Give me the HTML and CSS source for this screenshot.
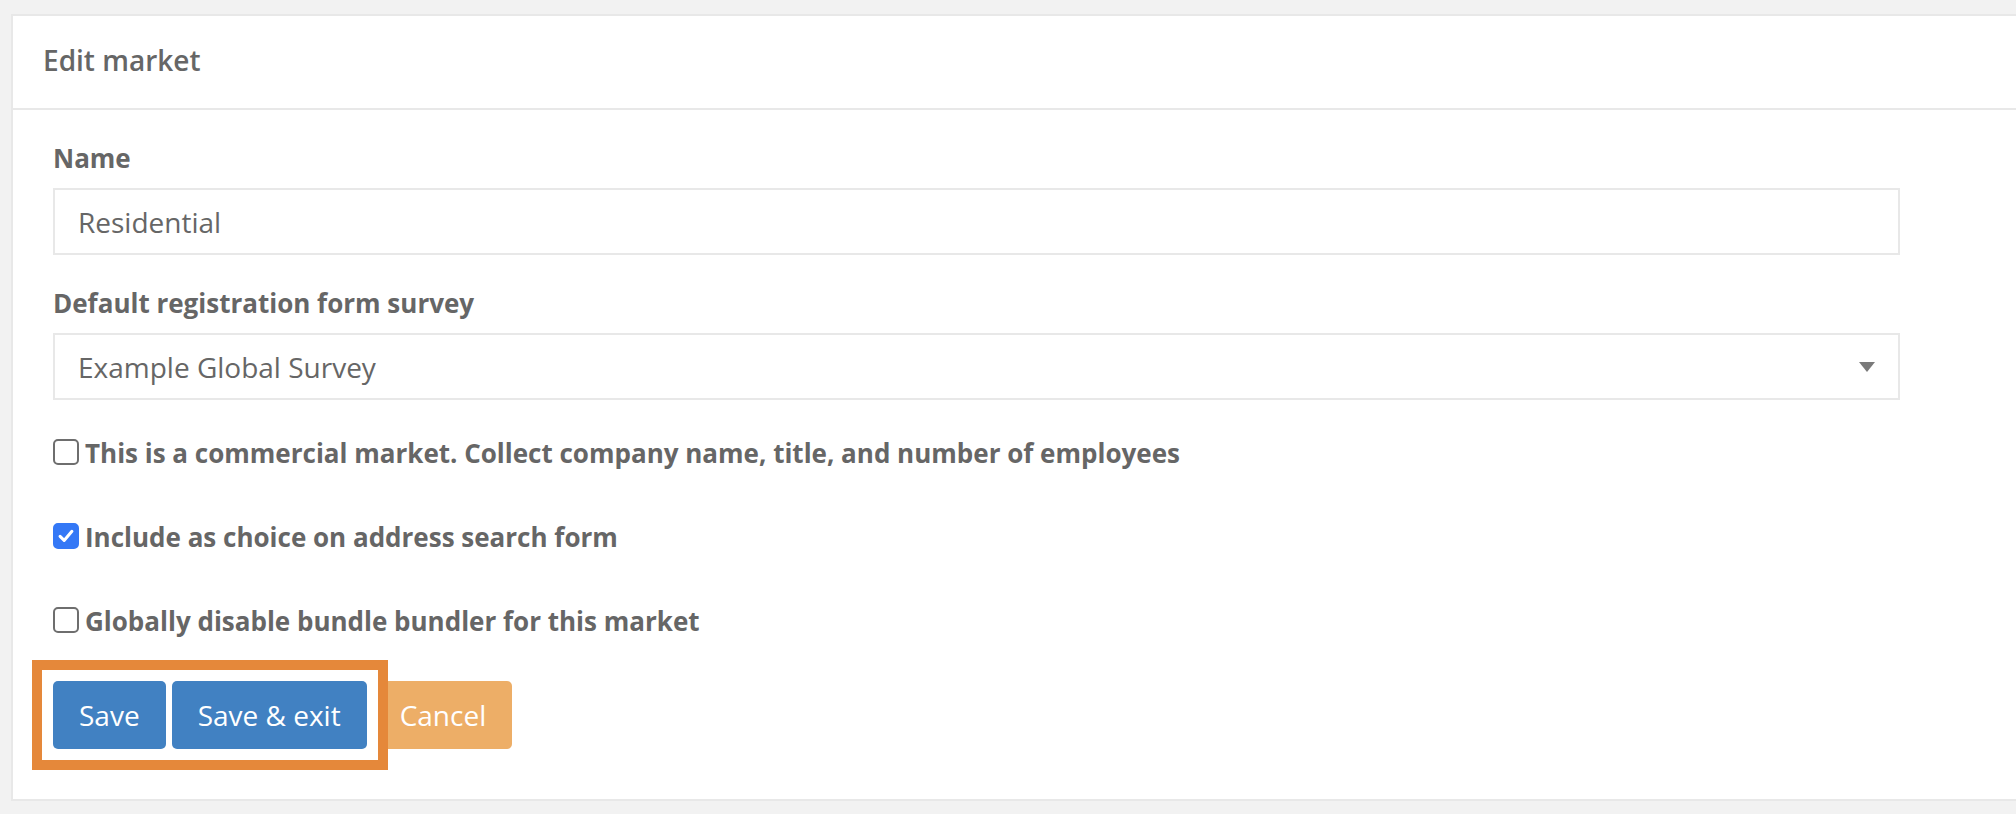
FILE: index.html
```html
<!DOCTYPE html>
<html lang="en">
<head>
<meta charset="utf-8">
<title>Edit market</title>
<link rel="stylesheet" href="styles.css">
</head>
<body>
<div class="panel">
  <div class="panel-heading">Edit market</div>
  <div class="panel-body">
    <form class="form">
      <div class="field">
        <label class="field-label">Name</label>
        <div class="control">Residential</div>
      </div>
      <div class="field">
        <label class="field-label">Default registration form survey</label>
        <div class="control select">
          <span>Example Global Survey</span>
          <span class="caret"></span>
        </div>
      </div>
      <div class="checks">
        <label class="check">
          <span class="box"></span>
          <span class="check-text">This is a commercial market. Collect company name, title, and number of employees</span>
        </label>
        <label class="check">
          <span class="box checked"><svg viewBox="0 0 26 26" width="22" height="22"><path d="M6 13.5 L10.8 18.2 L20 7.5" fill="none" stroke="#fff" stroke-width="3.6" stroke-linecap="round" stroke-linejoin="round"/></svg></span>
          <span class="check-text">Include as choice on address search form</span>
        </label>
        <label class="check">
          <span class="box"></span>
          <span class="check-text">Globally disable bundle bundler for this market</span>
        </label>
      </div>
      <div class="actions">
        <button type="button" class="btn btn-primary">Save</button>
        <button type="button" class="btn btn-primary">Save &amp; exit</button>
        <button type="button" class="btn btn-warning">Cancel</button>
        <div class="highlight"></div>
      </div>
    </form>
  </div>
</div>
</body>
</html>
```
FILE: styles.css
```css
html, body {
  margin: 0;
  padding: 0;
}
body {
  background: #f2f2f2;
  font-family: "Open Sans", "Liberation Sans", sans-serif;
  color: #666;
  padding: 14px 0 0 11px;
  overflow: hidden;
  height: 814px;
  box-sizing: border-box;
}
.panel {
  background: #fff;
  border: 2px solid #e8e8e8;
  border-right: none;
  margin-right: -20px;
}
.panel-heading {
  padding: 24px 30px 28px;
  font-size: 28px;
  line-height: 40px;
  font-weight: 600;
  color: #666;
  border-bottom: 2px solid #e8e8e8;
}
.panel-body {
  padding: 30px 40px 50px 40px;
}
.form {
  width: 1847px;
}
.field {
  margin-bottom: 30px;
}
.field-label {
  display: block;
  font-size: 26px;
  line-height: 37px;
  font-weight: 700;
  margin-bottom: 11px;
}
.control {
  box-sizing: border-box;
  height: 67px;
  border: 2px solid #e8e8e8;
  padding: 0 23px;
  font-size: 28px;
  display: flex;
  align-items: center;
  color: #666;
}
.select {
  justify-content: space-between;
}
.caret {
  width: 0;
  height: 0;
  border-left: 8px solid transparent;
  border-right: 8px solid transparent;
  border-top: 10px solid #7a7a7a;
}
.checks {
  display: flex;
  flex-direction: column;
  gap: 47px;
  margin-top: 35px;
}
.check {
  display: flex;
  align-items: flex-start;
  gap: 6px;
  font-size: 26px;
  line-height: 37px;
  font-weight: 700;
  color: #666;
}
.box {
  box-sizing: border-box;
  width: 26px;
  height: 26px;
  margin-top: 4px;
  border: 2px solid #6e6e6e;
  border-radius: 5px;
  background: #fff;
  display: flex;
  align-items: center;
  justify-content: center;
  flex: none;
}
.box.checked {
  background: #3478f6;
  border-color: #3478f6;
}
.actions {
  position: relative;
  display: flex;
  gap: 6px;
  margin-top: 41px;
}
.btn {
  height: 68px;
  border: none;
  border-radius: 5px;
  font-family: "Open Sans", "Liberation Sans", sans-serif;
  font-size: 28px;
  color: #fff;
  padding: 0 26px;
  cursor: pointer;
}
.btn-primary {
  background: #4181c2;
}
.btn-warning {
  background: #edae67;
  margin-left: 1px;
}
.highlight {
  position: absolute;
  left: -21px;
  top: -21px;
  width: 356px;
  height: 110px;
  box-sizing: border-box;
  border: 10px solid #e5883a;
  box-shadow: inset 0 0 0 4px #fff;
  pointer-events: none;
}
```
